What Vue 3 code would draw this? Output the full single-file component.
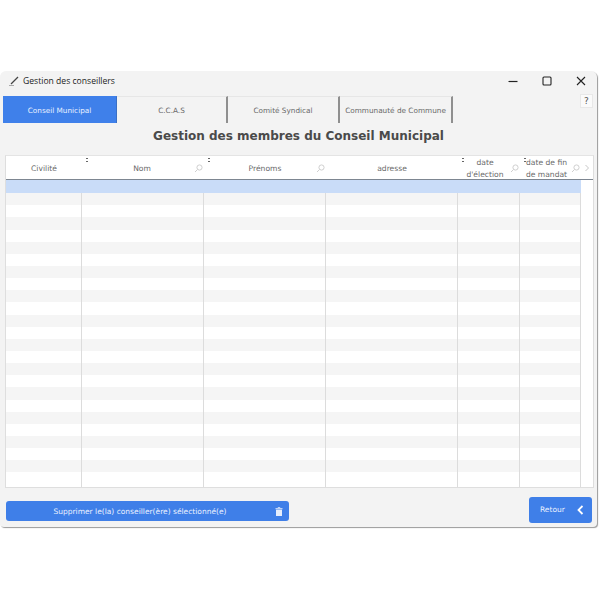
<template>
  <div class="page">
    <div class="window">
      <div class="titlebar">
        <svg class="pen" width="12" height="12" viewBox="0 0 12 12">
          <path d="M3 9 L10 2" stroke="#444" stroke-width="1.3" fill="none" />
          <path d="M1 10.5 L6 10.5" stroke="#aaa" stroke-width="1" fill="none" />
        </svg>
        <span class="title-text">Gestion des conseillers</span>
        <div class="controls">
          <svg width="12" height="12" viewBox="0 0 12 12"><path d="M1.5 6.5 H10.5" stroke="#222" stroke-width="1.2" /></svg>
          <svg width="12" height="12" viewBox="0 0 12 12"><rect x="2" y="2" width="8" height="8" rx="1" fill="none" stroke="#222" stroke-width="1.1" /></svg>
          <svg width="12" height="12" viewBox="0 0 12 12"><path d="M2 2 L10 10 M10 2 L2 10" stroke="#222" stroke-width="1.1" /></svg>
        </div>
      </div>

      <div class="tabs-row">
        <div class="tabs">
          <div v-for="(t, i) in tabs" :key="t.label" class="tab" :class="{ active: i === 0 }" :style="{ width: t.w + 'px' }">{{ t.label }}</div>
        </div>
        <div class="help">?</div>
      </div>

      <h1 class="heading">Gestion des membres du Conseil Municipal</h1>

      <div class="table">
        <div class="head">
          <div class="grid">
            <div v-for="c in cols" :key="c.key" class="th" :class="c.key">
              <span class="th-label">{{ c.label }}</span>
              <svg v-if="c.search" class="loupe" width="9" height="9" viewBox="0 0 9 9">
                <circle cx="5.5" cy="3.5" r="2.6" fill="none" stroke="#cfcfcf" />
                <path d="M3.5 5.5 L1 8" stroke="#cfcfcf" />
              </svg>
              <span v-if="c.dots" class="dots"></span>
            </div>
          </div>
          <svg class="next" width="6" height="8" viewBox="0 0 6 8">
            <path d="M1.5 1 L4.5 4 L1.5 7" fill="none" stroke="#c8c8c8" />
          </svg>
        </div>
        <div class="body">
          <div v-for="n in 25" :key="n" class="grid row" :class="{ selected: n === 1, odd: n % 2 === 0 }">
            <div v-for="c in cols" :key="c.key" class="td"></div>
          </div>
        </div>
      </div>

      <div class="footer">
        <button class="btn delete">
          <span class="delete-label">Supprimer le(la) conseiller(ère) sélectionné(e)</span>
          <svg width="8" height="9" viewBox="0 0 8 9">
            <path d="M0.5 1.2 H7.5 V2.2 H0.5 Z M1 2.8 H7 V9 H1 Z M2.8 0.3 H5.2 V1 H2.8 Z" fill="#e6eefc" />
          </svg>
        </button>
        <button class="btn back">
          <span>Retour</span>
          <svg width="7" height="10" viewBox="0 0 7 10">
            <path d="M5.5 1 L1.5 5 L5.5 9" fill="none" stroke="#fff" stroke-width="1.8" />
          </svg>
        </button>
      </div>
    </div>
  </div>
</template>

<script setup>
const tabs = [
  { label: 'Conseil Municipal', w: 114 },
  { label: 'C.C.A.S', w: 111 },
  { label: 'Comité Syndical', w: 112 },
  { label: 'Communauté de Commune', w: 113 }
]

const cols = [
  { key: 'civ', label: 'Civilité', dots: true },
  { key: 'nom', label: 'Nom', search: true, dots: true },
  { key: 'pre', label: 'Prénoms', search: true },
  { key: 'adr', label: 'adresse', dots: true },
  { key: 'el', label: 'date d\'élection', search: true, dots: true },
  { key: 'fin', label: 'date de fin de mandat', search: true }
]
</script>

<style>
html, body {
  margin: 0;
  background: #fff;
}
</style>

<style scoped>
.page {
  width: 601px;
  height: 601px;
  padding-top: 71px;
  box-sizing: border-box;
  overflow: hidden;
  font-family: "DejaVu Sans", sans-serif;
}

.window {
  width: 597px;
  height: 456px;
  background: #f3f3f3;
  border-radius: 6px 6px 4px 4px;
  box-shadow: 1px 1px 1px #9a9a9a;
  display: flex;
  flex-direction: column;
}

.titlebar {
  height: 25px;
  box-sizing: border-box;
  padding: 0 0 5px 8px;
  display: flex;
  align-items: center;
  flex-shrink: 0;
}

.pen {
  margin-right: 3px;
}

.title-text {
  font-family: "Open Sans", sans-serif;
  font-size: 8.6px;
  color: #1c1c1c;
}

.controls {
  margin-left: auto;
  width: 80px;
  display: flex;
  justify-content: space-between;
  margin-right: 10px;
}

.tabs-row {
  height: 27px;
  display: flex;
  padding-left: 3px;
  flex-shrink: 0;
  position: relative;
}

.tabs {
  display: flex;
  height: 27px;
  box-sizing: border-box;
}

.tab {
  box-sizing: border-box;
  display: flex;
  align-items: center;
  justify-content: center;
  font-size: 7.3px;
  color: #6a6a6a;
  border-top: 1px solid #e6e6e6;
  border-right: 2px solid #8f8f8f;
}

.tab.active {
  background: #3f80ea;
  color: #e9f1ff;
  border-top-color: #3f80ea;
  border-right: 1px solid #3a6fc4;
}

.help {
  position: absolute;
  right: 4px;
  top: -2px;
  width: 13px;
  height: 14px;
  background: #fafafa;
  border: 1px solid #e8e8e8;
  box-sizing: border-box;
  font-size: 9px;
  color: #555;
  display: flex;
  align-items: center;
  justify-content: center;
}

.heading {
  margin: 0;
  height: 32px;
  line-height: 27px;
  text-align: center;
  font-size: 12px;
  font-weight: bold;
  color: #4a4a4a;
  flex-shrink: 0;
}

.table {
  margin-left: 5px;
  width: 589px;
  height: 333px;
  border: 1px solid #dedede;
  border-top: 1px solid #e4e4e4;
  box-sizing: border-box;
  background: #fff;
  overflow: hidden;
  flex-shrink: 0;
  display: flex;
  flex-direction: column;
}

.grid {
  display: grid;
  grid-template-columns: 76px 122px 122px 132px 62px 61px;
}

.head {
  display: flex;
  height: 24px;
  flex-shrink: 0;
  box-sizing: border-box;
  border-bottom: 1px solid #7d8691;
  position: relative;
}

.th {
  position: relative;
  display: flex;
  align-items: center;
  justify-content: center;
  padding-top: 1px;
  font-size: 7.6px;
  line-height: 12px;
  color: #6a6a6a;
  text-align: center;
}

.th.el,
.th.fin {
  padding-right: 8px;
}

.th.nom {
  padding-right: 2px;
}

.th.el .th-label,
.th.fin .th-label {
  max-width: 46px;
}

.loupe {
  position: absolute;
  right: 1px;
  top: 8px;
}

.dots {
  position: absolute;
  right: -6px;
  top: 1px;
  width: 2px;
  height: 6px;
  background: radial-gradient(circle at center, #666 0.9px, transparent 1px) top / 2px 3px repeat-y;
}

.next {
  position: absolute;
  right: 3px;
  top: 8px;
}

.body {
  width: 575px;
  flex: 1;
  display: flex;
  flex-direction: column;
}

.row {
  height: 12.15px;
  flex-shrink: 0;
}

.row:last-child {
  flex: 1;
}

.td {
  border-right: 1px solid #dcdcdc;
}

.row.odd {
  background: #f5f5f5;
}

.row.selected {
  height: 13.15px;
  background: #c9dcf8;
}

.row.selected .td {
  border-right-color: #c9dcf8;
}

.footer {
  flex: 1;
  position: relative;
  display: flex;
  align-items: center;
  justify-content: space-between;
  padding: 0 5px 0 6px;
}

.btn {
  border: none;
  background: #3f7fe8;
  color: #eaf1ff;
  font-family: "DejaVu Sans", sans-serif;
  font-size: 7.5px;
  display: flex;
  align-items: center;
  padding: 0;
}

.delete {
  width: 283px;
  height: 20px;
  border-radius: 3px;
  margin-top: 7px;
  padding-right: 6px;
}

.delete-label {
  flex: 1;
  text-align: center;
  padding-right: 1px;
}

.back {
  width: 63px;
  height: 26px;
  border-radius: 3px;
  margin-top: 4px;
  justify-content: space-between;
  padding: 0 8px 0 11px;
}
</style>
